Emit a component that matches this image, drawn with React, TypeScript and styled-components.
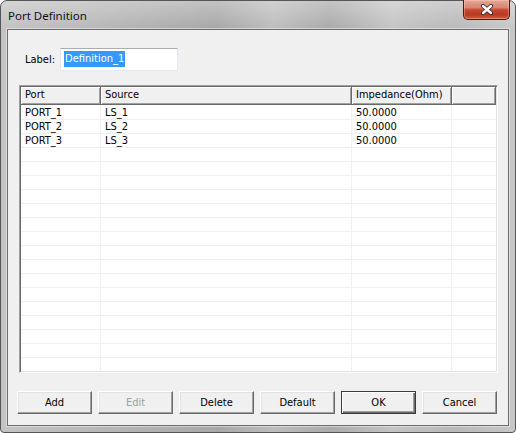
import React from 'react';
import styled, { createGlobalStyle } from 'styled-components';

const GlobalStyle = createGlobalStyle`
  html, body {
    margin: 0;
    padding: 0;
    background: #ffffff;
  }

  body {
    width: 516px;
    height: 433px;
    overflow: hidden;
  }
`;

const uiFont = `"DejaVu Sans Condensed", "DejaVu Sans", Tahoma, sans-serif`;

const Window = styled.div`
  box-sizing: border-box;
  width: 516px;
  height: 433px;
  display: flex;
  flex-direction: column;
  border: 1px solid #555555;
  border-radius: 7px 7px 4px 4px;
  background:
    linear-gradient(180deg, rgba(255, 255, 255, 0.3) 0px, rgba(255, 255, 255, 0) 28px),
    linear-gradient(
      90deg,
      #c3c3c3 0%,
      #b8b8b8 18%,
      #a7a7a7 42%,
      #bdbdbd 53%,
      #aaaaaa 64%,
      #c4c4c4 76%,
      #b9b9b9 88%,
      #c7c7c7 100%
    );
  font-family: ${uiFont};
  font-size: 11px;
  color: #000000;
`;

const TitleBar = styled.div`
  display: flex;
  align-items: flex-start;
  height: 28px;
  flex: none;
  padding: 0 5px 0 7px;
`;

const Title = styled.div`
  align-self: center;
  font-family: "Noto Sans", "Open Sans", sans-serif;
  font-size: 11.5px;
  color: #111111;
`;

const CloseButton = styled.div`
  box-sizing: border-box;
  margin: -1px 0 0 auto;
  width: 47px;
  height: 20px;
  display: flex;
  align-items: center;
  justify-content: center;
  border: 1px solid #4a1a12;
  border-top: none;
  border-radius: 0 0 5px 5px;
  background: linear-gradient(
    180deg,
    #e6a999 0%,
    #d88571 40%,
    #c8472e 52%,
    #b83a22 78%,
    #d1613f 100%
  );
  box-shadow: inset 0 0 0 1px rgba(255, 220, 210, 0.35);
`;

const Client = styled.div`
  flex: 1;
  display: flex;
  flex-direction: column;
  margin: 0 6px 6px 6px;
  border: 1px solid #6c6c6c;
  background: #f0f0f0;
  box-shadow: 0 0 0 1px rgba(255, 255, 255, 0.45);
`;

const LabelRow = styled.div`
  box-sizing: border-box;
  height: 55px;
  flex: none;
  display: flex;
  align-items: flex-start;
  padding: 18px 0 0 17px;
`;

const FieldLabel = styled.span`
  line-height: 23px;
  margin-right: 5px;
`;

const TextBox = styled.div`
  box-sizing: border-box;
  width: 118px;
  height: 23px;
  padding: 2px 0 0 3px;
  background: #ffffff;
  border: 1px solid;
  border-color: #abadb3 #e3e9ef #e3e9ef #e3e9ef;
`;

const Selection = styled.span`
  display: inline-block;
  padding: 0 1px;
  line-height: 16px;
  background: #3399ff;
  color: #ffffff;
`;

const ListView = styled.div`
  box-sizing: border-box;
  height: 288px;
  flex: none;
  margin: 0 10px 0 11px;
  padding: 1px;
  display: flex;
  flex-direction: column;
  overflow: hidden;
  background: #ffffff;
  border: 1px solid;
  border-color: #a0a0a0 #ffffff #ffffff #a0a0a0;
  box-shadow: inset 1px 1px 0 #696969, inset -1px -1px 0 #e3e3e3;
`;

const HeaderRow = styled.div`
  display: flex;
  height: 18px;
  flex: none;
`;

const HeaderCell = styled.div<{ $width?: number }>`
  box-sizing: border-box;
  ${(p) => (p.$width ? `width: ${p.$width}px; flex: none;` : 'flex: 1;')}
  height: 18px;
  padding-left: 4px;
  line-height: 16px;
  background: #f0f0f0;
  border-right: 1px solid #696969;
  border-bottom: 1px solid #696969;
  box-shadow: inset 1px 1px 0 #ffffff, inset -1px -1px 0 #a0a0a0;
  white-space: nowrap;
  overflow: hidden;
`;

const Rows = styled.div`
  flex: 1;
  overflow: hidden;
  padding-top: 1px;
`;

const Row = styled.div`
  box-sizing: border-box;
  display: flex;
  height: 14px;
  border-bottom: 1px solid #f0f0f0;
`;

const Cell = styled.div<{ $width?: number }>`
  box-sizing: border-box;
  ${(p) => (p.$width ? `width: ${p.$width}px; flex: none;` : 'flex: 1;')}
  padding-left: 4px;
  line-height: 13px;
  border-right: ${(p) => (p.$width ? '1px solid #f0f0f0' : 'none')};
  white-space: nowrap;
`;

const ButtonRow = styled.div`
  display: flex;
  gap: 6px;
  padding: 18px 10px 0 9px;
`;

const Button = styled.button<{ $default?: boolean }>`
  box-sizing: border-box;
  width: 75px;
  height: 23px;
  padding: 0;
  font-family: inherit;
  font-size: inherit;
  color: #000000;
  background: #f0f0f0;
  border: 1px solid;
  border-color: ${(p) =>
    p.$default ? '#3c3c3c' : '#ffffff #696969 #696969 #ffffff'};
  box-shadow: ${(p) =>
    p.$default
      ? 'inset 1px 1px 0 #ffffff, inset -1px -1px 0 #696969, inset -2px -2px 0 #a0a0a0'
      : 'inset -1px -1px 0 #a0a0a0, inset 1px 1px 0 #e3e3e3'};

  &:disabled {
    color: #a0a0a0;
  }
`;

const columns = [
  { title: 'Port', width: 80 },
  { title: 'Source', width: 251 },
  { title: 'Impedance(Ohm)', width: 100 },
];

const ports = [
  { port: 'PORT_1', source: 'LS_1', impedance: '50.0000' },
  { port: 'PORT_2', source: 'LS_2', impedance: '50.0000' },
  { port: 'PORT_3', source: 'LS_3', impedance: '50.0000' },
];

const TOTAL_ROWS = 19;

function CloseGlyph() {
  return (
    <svg width="14" height="11" viewBox="0 0 14 11">
      <path d="M3 2 L11 9 M11 2 L3 9" stroke="#3b2a28" strokeWidth="4.2" strokeLinecap="round" />
      <path d="M3 2 L11 9 M11 2 L3 9" stroke="#ffffff" strokeWidth="2.4" strokeLinecap="round" />
    </svg>
  );
}

export default function App() {
  const rows = Array.from({ length: TOTAL_ROWS }, (_, i) => ports[i]);

  return (
    <>
      <GlobalStyle />
      <Window>
        <TitleBar>
          <Title>Port Definition</Title>
          <CloseButton>
            <CloseGlyph />
          </CloseButton>
        </TitleBar>

        <Client>
          <LabelRow>
            <FieldLabel>Label:</FieldLabel>
            <TextBox>
              <Selection>Definition_1</Selection>
            </TextBox>
          </LabelRow>

          <ListView>
            <HeaderRow>
              {columns.map((col) => (
                <HeaderCell key={col.title} $width={col.width}>
                  {col.title}
                </HeaderCell>
              ))}
              <HeaderCell />
            </HeaderRow>

            <Rows>
              {rows.map((row, i) => (
                <Row key={i}>
                  <Cell $width={80}>{row?.port}</Cell>
                  <Cell $width={251}>{row?.source}</Cell>
                  <Cell $width={100}>{row?.impedance}</Cell>
                  <Cell />
                </Row>
              ))}
            </Rows>
          </ListView>

          <ButtonRow>
            <Button>Add</Button>
            <Button disabled>Edit</Button>
            <Button>Delete</Button>
            <Button>Default</Button>
            <Button $default>OK</Button>
            <Button>Cancel</Button>
          </ButtonRow>
        </Client>
      </Window>
    </>
  );
}
